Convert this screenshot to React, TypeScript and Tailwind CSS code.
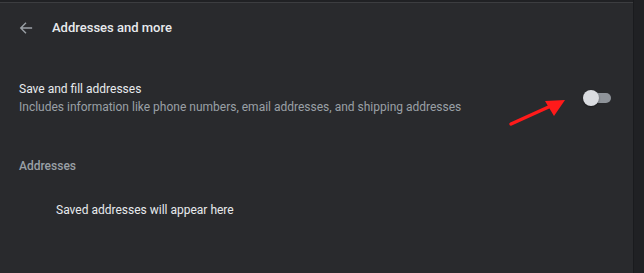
import React from "react";

export default function App() {
  return (
    <div className="flex w-[644px] h-[273px] bg-[#292a2d] overflow-hidden" style={{ fontFamily: "Roboto, 'Liberation Sans', sans-serif" }}>
      <div className="flex-1 flex flex-col relative">
        <div className="h-[3px] bg-[#202124] border-b border-[#3c3d40]" />
        <div className="flex items-center h-[50px] pl-[19px]">
          <svg width="14" height="14" viewBox="0 0 16 16" className="text-[#9aa0a6]">
            <path d="M15 8H2.5M8 2L2 8l6 6" fill="none" stroke="currentColor" strokeWidth="1.6" />
          </svg>
          <span className="ml-[19px] text-[13px] font-medium text-[#e8eaed]">Addresses and more</span>
        </div>
        <div className="flex items-center mt-[27px] pl-[19px] pr-[22px]">
          <div className="flex-1 flex flex-col">
            <span className="text-[12px] text-[#e8eaed] leading-[18px]">Save and fill addresses</span>
            <span className="text-[12px] text-[#9aa0a6] leading-[18px]">Includes information like phone numbers, email addresses, and shipping addresses</span>
          </div>
          <div className="relative w-[28px] h-[16px] flex items-center">
            <div className="absolute left-[2px] right-0 h-[10px] rounded-full bg-[#9aa0a6] opacity-90" />
            <div className="absolute left-0 w-[16px] h-[16px] rounded-full bg-[#dadce0] shadow-[0_1px_2px_rgba(0,0,0,0.4)]" />
          </div>
        </div>
        <div className="mt-[41px] pl-[19px] text-[12px] font-medium text-[#9aa0a6]">Addresses</div>
        <div className="mt-[26px] pl-[56px] text-[12px] text-[#e8eaed]">Saved addresses will appear here</div>
        <svg className="absolute left-[505px] top-[95px]" width="65" height="35" viewBox="0 0 65 35">
          <path d="M6 29L48 10" stroke="#ff1a1a" strokeWidth="3.5" strokeLinecap="round" />
          <path d="M60 5L40 6L49 21Z" fill="#ff1a1a" />
        </svg>
      </div>
      <div className="w-[11px] bg-[#202124] border-l border-[#1a1b1e]" />
    </div>
  );
}
